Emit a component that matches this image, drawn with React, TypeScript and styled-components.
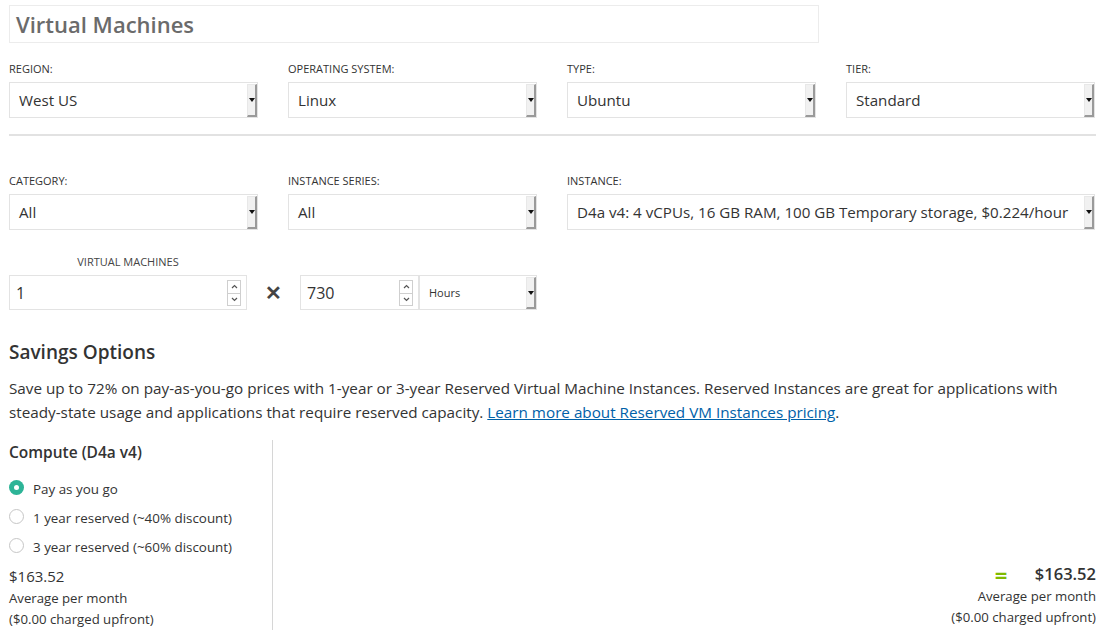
import React from "react";
import styled, { createGlobalStyle } from "styled-components";

const Global = createGlobalStyle`
  html, body { margin: 0; padding: 0; background: #fff; }
  body { font-family: "Open Sans", "Noto Sans", sans-serif; color: #333; }
  * { box-sizing: border-box; }
`;

const Page = styled.div`
  width: 1112px;
  padding: 5px 16px 0 9px;
`;

const TitleBox = styled.div`
  width: 810px;
  height: 38px;
  border: 1px solid #ececec;
  padding-left: 6px;
  display: flex;
  align-items: center;
  font-size: 22px;
  font-weight: 600;
  color: #6b6b6b;
`;

const Grid = styled.div<{ $top: number }>`
  display: grid;
  grid-template-columns: repeat(4, 249px);
  column-gap: 30px;
  margin-top: ${(p) => p.$top}px;
`;

const Field = styled.div<{ $span?: number }>`
  grid-column: span ${(p) => p.$span ?? 1};
  display: flex;
  flex-direction: column;
`;

const Label = styled.div`
  font-size: 11px;
  color: #333;
  text-transform: uppercase;
  height: 14px;
  line-height: 14px;
  margin-bottom: 6px;
`;

const SelectBox = styled.div<{ $w?: number; $h?: number; $fs?: number }>`
  width: ${(p) => (p.$w ? `${p.$w}px` : "auto")};
  height: ${(p) => p.$h ?? 36}px;
  border: 1px solid #e3e3e3;
  display: flex;
  align-items: center;
  justify-content: space-between;
  padding-left: 9px;
  font-size: ${(p) => p.$fs ?? 15.15}px;
  color: #333;
  background: #fff;
  white-space: nowrap;
`;

const ArrowBtn = styled.div`
  width: 10px;
  align-self: stretch;
  margin: 1px 0 0 0;
  background: #f1f1f1;
  border-left: 1px solid #e8e8e8;
  border-top: 1px solid #e8e8e8;
  border-right: 2px solid #9a9a9a;
  border-bottom: 2px solid #9a9a9a;
  display: flex;
  align-items: center;
  justify-content: center;
  &::after {
    content: "";
    border-left: 3px solid transparent;
    border-right: 3px solid transparent;
    border-top: 4px solid #111;
    margin-left: 1px;
  }
`;

const Select = ({ value, w, h, fs }: { value: string; w?: number; h?: number; fs?: number }) => (
  <SelectBox $w={w} $h={h} $fs={fs}>
    <span>{value}</span>
    <ArrowBtn />
  </SelectBox>
);

const Divider = styled.div`
  height: 2px;
  background: #e2e2e2;
  margin-top: 16px;
  width: 1087px;
`;

const QtyRow = styled.div`
  display: flex;
  align-items: flex-end;
  margin-top: 25px;
`;

const QtyField = styled.div`
  display: flex;
  flex-direction: column;
  align-items: center;
  width: 238px;
`;

const SmallLabel = styled.div`
  font-size: 11px;
  color: #444;
  text-transform: uppercase;
  line-height: 14px;
  margin-bottom: 6px;
`;

const NumBox = styled.div<{ $w: number }>`
  width: ${(p) => p.$w}px;
  height: 35px;
  border: 1px solid #e3e3e3;
  display: flex;
  align-items: center;
  justify-content: space-between;
  padding: 0 5px 0 6px;
  font-size: 16px;
  color: #333;
`;

const Spinner = styled.div`
  width: 14px;
  display: flex;
  flex-direction: column;
  border: 1px solid #cfcfcf;
`;

const SpinBtn = styled.div<{ $down?: boolean }>`
  height: 12px;
  display: flex;
  align-items: center;
  justify-content: center;
  border-top: ${(p) => (p.$down ? "1px solid #cfcfcf" : "none")};
  svg { display: block; }
`;

const Spin = () => (
  <Spinner>
    <SpinBtn>
      <svg width="7" height="5" viewBox="0 0 7 5"><path d="M1 4 L3.5 1.5 L6 4" stroke="#555" strokeWidth="1.2" fill="none" /></svg>
    </SpinBtn>
    <SpinBtn $down>
      <svg width="7" height="5" viewBox="0 0 7 5"><path d="M1 1 L3.5 3.5 L6 1" stroke="#555" strokeWidth="1.2" fill="none" /></svg>
    </SpinBtn>
  </Spinner>
);

const Times = styled.div`
  width: 53px;
  height: 35px;
  display: flex;
  align-items: center;
  justify-content: center;
  font-size: 20px;
  font-weight: 700;
  color: #444;
`;

const SectionTitle = styled.h2`
  margin: 29px 0 0 0;
  font-size: 19px;
  font-weight: 600;
  line-height: 26px;
  color: #333;
`;

const Para = styled.p`
  margin: 11px 0 0 0;
  font-size: 15.25px;
  line-height: 24px;
  color: #333;
  width: 1087px;
`;

const Link = styled.a`
  color: #0061a8;
  text-decoration: underline;
`;

const Bottom = styled.div`
  display: flex;
  margin-top: 16px;
  width: 1087px;
`;

const LeftCol = styled.div`
  width: 264px;
  border-right: 1px solid #d6d6d6;
  height: 190px;
`;

const ColTitle = styled.div`
  font-size: 15.5px;
  font-weight: 600;
  color: #333;
  line-height: 22px;
  margin-top: 1px;
`;

const RadioList = styled.div`
  display: flex;
  flex-direction: column;
  margin-top: 16px;
  gap: 9px;
`;

const RadioRow = styled.div`
  display: flex;
  align-items: center;
  gap: 9px;
  font-size: 13.4px;
  line-height: 20px;
  color: #333;
`;

const RadioDot = styled.span<{ $on?: boolean }>`
  width: 15px;
  height: 15px;
  border-radius: 50%;
  border: ${(p) => (p.$on ? "none" : "1px solid #c6c6c6")};
  background: ${(p) => (p.$on ? "#2db497" : "#fff")};
  display: inline-flex;
  align-items: center;
  justify-content: center;
  margin-top: -4px;
  &::after {
    content: "";
    display: ${(p) => (p.$on ? "block" : "none")};
    width: 5px;
    height: 5px;
    border-radius: 50%;
    background: #fff;
  }
`;

const Price = styled.div`
  font-size: 15px;
  color: #333;
  margin-top: 7px;
  line-height: 24px;
`;

const Sub = styled.div`
  font-size: 13.2px;
  color: #333;
  line-height: 21px;
`;

const RightCol = styled.div`
  flex: 1;
  display: flex;
  flex-direction: column;
  align-items: flex-end;
  justify-content: flex-end;
  padding-bottom: 2px;
`;

const TotalRow = styled.div`
  display: flex;
  align-items: center;
  line-height: 22px;
  margin-bottom: 1px;
`;

const Equals = styled.span`
  color: #7fba00;
  font-size: 22px;
  font-weight: 700;
  width: 40px;
  margin-left: -2px;
  text-align: left;
`;

const TotalPrice = styled.span`
  font-size: 16.5px;
  font-weight: 600;
  color: #333;
`;

export default function App() {
  return (
    <Page>
      <Global />
      <TitleBox>Virtual Machines</TitleBox>
      <Grid $top={19}>
        <Field>
          <Label>Region:</Label>
          <Select value="West US" />
        </Field>
        <Field>
          <Label>Operating system:</Label>
          <Select value="Linux" />
        </Field>
        <Field>
          <Label>Type:</Label>
          <Select value="Ubuntu" />
        </Field>
        <Field>
          <Label>Tier:</Label>
          <Select value="Standard" />
        </Field>
      </Grid>
      <Divider />
      <Grid $top={38}>
        <Field>
          <Label>Category:</Label>
          <Select value="All" />
        </Field>
        <Field>
          <Label>Instance series:</Label>
          <Select value="All" />
        </Field>
        <Field $span={2}>
          <Label>Instance:</Label>
          <Select value="D4a v4: 4 vCPUs, 16 GB RAM, 100 GB Temporary storage, $0.224/hour" />
        </Field>
      </Grid>
      <QtyRow>
        <QtyField>
          <SmallLabel>Virtual machines</SmallLabel>
          <NumBox $w={238}>
            <span>1</span>
            <Spin />
          </NumBox>
        </QtyField>
        <Times>✕</Times>
        <NumBox $w={119}>
          <span>730</span>
          <Spin />
        </NumBox>
        <Select value="Hours" w={118} h={35} fs={11} />
      </QtyRow>
      <SectionTitle>Savings Options</SectionTitle>
      <Para>
        Save up to 72% on pay-as-you-go prices with 1-year or 3-year Reserved Virtual Machine Instances. Reserved
        Instances are great for applications with steady-state usage and applications that require reserved capacity.{" "}
        <Link href="#">Learn more about Reserved VM Instances pricing</Link>.
      </Para>
      <Bottom>
        <LeftCol>
          <ColTitle>Compute (D4a v4)</ColTitle>
          <RadioList>
            <RadioRow>
              <RadioDot $on />
              Pay as you go
            </RadioRow>
            <RadioRow>
              <RadioDot />
              1 year reserved (~40% discount)
            </RadioRow>
            <RadioRow>
              <RadioDot />
              3 year reserved (~60% discount)
            </RadioRow>
          </RadioList>
          <Price>$163.52</Price>
          <Sub>Average per month</Sub>
          <Sub>($0.00 charged upfront)</Sub>
        </LeftCol>
        <RightCol>
          <TotalRow>
            <Equals>=</Equals>
            <TotalPrice>$163.52</TotalPrice>
          </TotalRow>
          <Sub>Average per month</Sub>
          <Sub>($0.00 charged upfront)</Sub>
        </RightCol>
      </Bottom>
    </Page>
  );
}
